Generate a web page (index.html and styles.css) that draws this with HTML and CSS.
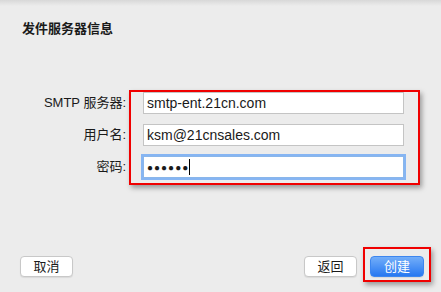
FILE: index.html
```html
<!DOCTYPE html>
<html lang="zh">
  <head>
    <meta charset="UTF-8" />
    <link rel="stylesheet" href="styles.css">
  </head>
  <body>
    <div class="dialog">
      <div class="title">发件服务器信息</div>

      <div class="form">
        <div class="labels">
          <div class="label">SMTP 服务器:</div>
          <div class="label">用户名:</div>
          <div class="label">密码:</div>
        </div>
        <div class="mark fields">
          <div class="field">smtp-ent.21cn.com</div>
          <div class="field">ksm@21cnsales.com</div>
          <div class="field focus">●●●●●●<span class="caret"></span></div>
        </div>
      </div>

      <div class="footer">
        <span class="btn">取消</span>
        <div class="right">
          <span class="btn">返回</span>
          <div class="mark ok-wrap">
            <span class="btn primary">创建</span>
          </div>
        </div>
      </div>
    </div>
  </body>
</html>
```

FILE: styles.css
```css
body {
  margin: 0;
  background: #ececec;
  font-family: "Liberation Sans", "Noto Sans CJK SC", sans-serif;
  color: #1a1a1a;
}
.dialog {
  width: 441px;
  height: 292px;
  display: flex;
  flex-direction: column;
  background: linear-gradient(#d8d8d8, #ececec 6px);
  box-sizing: border-box;
}
.title {
  padding: 21px 0 0 22px;
  font-size: 13px;
  font-weight: bold;
  line-height: 16px;
}
.form {
  display: flex;
  margin-top: 53px;
  padding-left: 30px;
}
.labels {
  width: 96px;
  padding-top: 2px;
  display: flex;
  flex-direction: column;
  gap: 10px;
  align-items: flex-end;
}
.label {
  height: 22px;
  line-height: 22px;
  font-size: 13px;
}
.mark {
  border: 2px solid #f00000;
  box-shadow: 2px 3px 5px rgba(0, 0, 0, 0.35);
}
.fields {
  margin-left: 3px;
  width: 291px;
  padding: 0 14px 5px 12px;
  box-sizing: border-box;
  display: flex;
  flex-direction: column;
  gap: 10px;
}
.field {
  height: 22px;
  line-height: 21px;
  box-sizing: border-box;
  border: 1px solid #c4c4c4;
  background: #fff;
  font-size: 14px;
  padding-left: 3px;
}
.field.focus {
  border-color: #8ab6ea;
  box-shadow: 0 0 0 2px #86b5f3;
  font-size: 10px;
  letter-spacing: 1px;
}
.caret {
  display: inline-block;
  width: 1px;
  height: 16px;
  background: #000;
  vertical-align: -4px;
  margin-left: 0;
}
.footer {
  margin-top: auto;
  display: flex;
  justify-content: space-between;
  align-items: flex-end;
  padding: 0 10px 15px 20px;
}
.right {
  display: flex;
  align-items: flex-end;
  gap: 6px;
}
.btn {
  display: inline-block;
  width: 53px;
  height: 21px;
  line-height: 20px;
  box-sizing: border-box;
  text-align: center;
  font-size: 13px;
  background: #fff;
  border: 1px solid #c8c8c8;
  border-radius: 4px;
  box-shadow: 0 1px 1px rgba(0, 0, 0, 0.08);
}
.ok-wrap {
  padding: 7px 5px 3px 5px;
  margin-bottom: -5px;
  display: flex;
}
.btn.primary {
  width: 54px;
  color: #fff;
  border-color: #3d86ef;
  background: linear-gradient(#73aef9, #2778f1);
}
```
